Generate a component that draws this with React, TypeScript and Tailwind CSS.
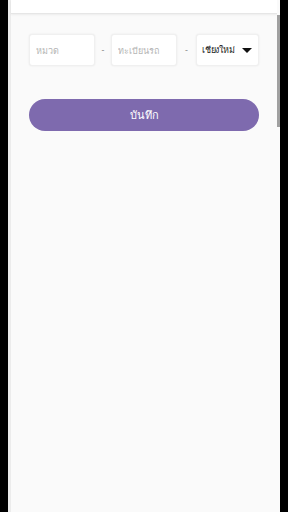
import { useState } from "react";

export default function App() {
  const [category, setCategory] = useState("");
  const [plate, setPlate] = useState("");

  return (
    <div className="flex h-[512px] w-full bg-black font-['Noto_Sans',sans-serif] overflow-hidden">
      <div className="w-[8px] shrink-0" />
      <div className="flex flex-1 border-l-[3px] border-[#ececec] bg-[#fafafa]">
        <div className="flex flex-1 flex-col">
          {/* Header */}
          <div className="h-[14px] shrink-0 bg-white border-b border-[#e6e6e6] shadow-[0_1px_2px_rgba(0,0,0,0.06)]" />

          {/* Form */}
          <div className="flex flex-col px-[18px] pt-[20px]">
            <div className="flex items-center h-[32px]">
              <input
                value={category}
                onChange={(e) => setCategory(e.target.value)}
                placeholder="หมวด"
                className="w-[66px] h-[32px] rounded-[3px] bg-white px-[6px] text-[9px] text-gray-800 placeholder:text-[#b5b5b5] outline-none shadow-[0_0_2px_rgba(0,0,0,0.08)] border border-[#f0f0f0]"
              />
              <span className="w-[16px] text-center text-[9px] text-[#888]">-</span>
              <input
                value={plate}
                onChange={(e) => setPlate(e.target.value)}
                placeholder="ทะเบียนรถ"
                className="w-[66px] h-[32px] rounded-[3px] bg-white px-[6px] text-[9px] text-gray-800 placeholder:text-[#b5b5b5] outline-none shadow-[0_0_2px_rgba(0,0,0,0.08)] border border-[#f0f0f0]"
              />
              <span className="w-[19px] text-center text-[9px] text-[#888]">-</span>
              <div className="flex w-[63px] h-[32px] items-center justify-between rounded-[3px] bg-white pl-[5px] pr-[6px] shadow-[0_0_2px_rgba(0,0,0,0.08)] border border-[#f0f0f0]">
                <span className="text-[9px] text-[#222] tracking-[-0.2px]">เชียงใหม่</span>
                <svg width="10" height="5" viewBox="0 0 10 5">
                  <path d="M0 0h10L5 5z" fill="#111" />
                </svg>
              </div>
            </div>

            <button className="mt-[33px] h-[32px] w-full rounded-full bg-[#7e6aae] text-[11px] text-white">
              บันทึก
            </button>
          </div>
        </div>

        {/* Scrollbar */}
        <div className="w-[3px] shrink-0 bg-[#fafafa] flex flex-col">
          <div className="h-[15px]" />
          <div className="h-[112px] bg-[#a0a0a0]" />
        </div>
      </div>
      <div className="w-[9px] shrink-0" />
    </div>
  );
}
